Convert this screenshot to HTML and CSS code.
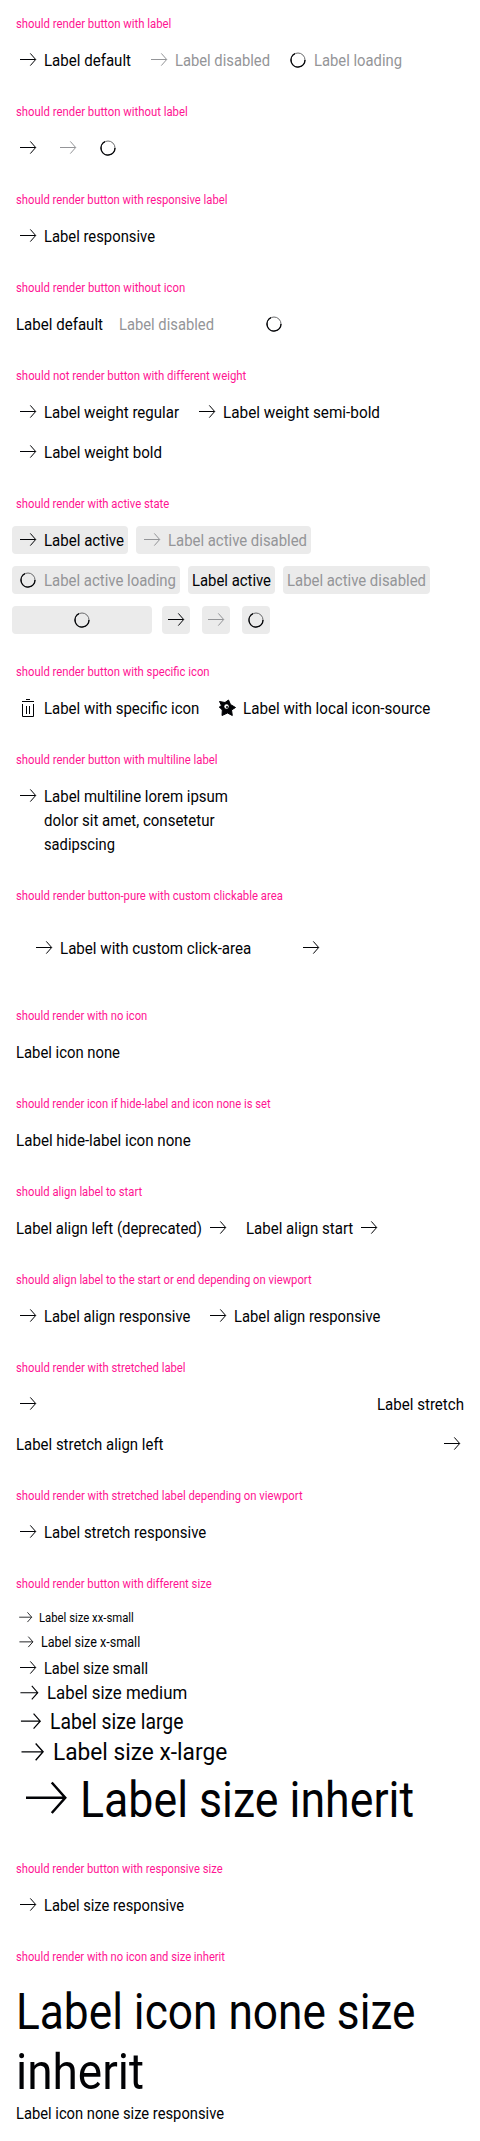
FILE: index.html
```html
<!DOCTYPE html>
<html lang="en">
<head>
<meta charset="utf-8">
<title>Button pure</title>
<link rel="stylesheet" href="styles.css">
</head>
<body>
<svg class="defs" aria-hidden="true">
  <symbol id="arrow" viewBox="0 0 24 24"><path d="M4 11.5H19.6M14.3 5.4L19.7 11.5L14.3 17.6" fill="none" stroke="currentColor" stroke-width="1"/></symbol>
  <symbol id="spin" viewBox="0 0 24 24"><circle cx="12" cy="12" r="7" fill="none" stroke="#6b6c6e" stroke-width="1"/><path d="M9 5.700A7 7 0 1 0 19 12" fill="none" stroke="#010205" stroke-width="1.3"/></symbol>
  <symbol id="trash" viewBox="0 0 24 24"><path d="M6 5.500H18M10 3.500H14M6.500 8V20.500H17.500V8M10.500 10V18M13.500 10V18" fill="none" stroke="currentColor"/></symbol>
  <symbol id="star" viewBox="0 0 24 24"><path d="M4.500 5.500L10 6.500L13.500 4L15.500 8.500L20.500 11.500L16.500 14L17.300 19.500L12.500 17L7 19.500L7.300 14L4.300 11L6.500 9.500Z" fill="currentColor" stroke="currentColor" stroke-linejoin="round"/><circle cx="11.500" cy="10.500" r="2.200" fill="#fff"/><circle cx="12" cy="11" r="1" fill="currentColor"/></symbol>
</svg>

<section><h2 data-w="155.3">should render button with label</h2>
<div class="row"><span class="btn"><svg><use href="#arrow"/></svg><span data-w="87">Label default</span></span><span class="btn off"><svg><use href="#arrow"/></svg><span data-w="95">Label disabled</span></span><span class="btn off"><svg><use href="#spin"/></svg><span data-w="88">Label loading</span></span></div></section>

<section><h2 data-w="171.7">should render button without label</h2>
<div class="row"><span class="btn"><svg><use href="#arrow"/></svg></span><span class="btn off"><svg><use href="#arrow"/></svg></span><span class="btn off"><svg><use href="#spin"/></svg></span></div></section>

<section><h2 data-w="211.5">should render button with responsive label</h2>
<div class="row"><span class="btn"><svg><use href="#arrow"/></svg><span data-w="111">Label responsive</span></span></div></section>

<section><h2 data-w="169.3">should render button without icon</h2>
<div class="row"><span class="btn"><span data-w="87">Label default</span></span><span class="btn off"><span data-w="95">Label disabled</span></span><span class="btn off busy"><svg><use href="#spin"/></svg></span></div></section>

<section><h2 data-w="230.3">should not render button with different weight</h2>
<div class="row"><span class="btn"><svg><use href="#arrow"/></svg><span data-w="135">Label weight regular</span></span><span class="btn"><svg><use href="#arrow"/></svg><span data-w="157">Label weight semi-bold</span></span></div>
<div class="row"><span class="btn"><svg><use href="#arrow"/></svg><span data-w="118">Label weight bold</span></span></div></section>

<section><h2 data-w="153.3">should render with active state</h2>
<div class="row"><span class="btn active"><svg><use href="#arrow"/></svg><span data-w="80">Label active</span></span><span class="btn off active"><svg><use href="#arrow"/></svg><span data-w="139">Label active disabled</span></span></div>
<div class="row"><span class="btn off active"><svg><use href="#spin"/></svg><span data-w="132">Label active loading</span></span><span class="btn active"><span data-w="79">Label active</span></span><span class="btn off active"><span data-w="139">Label active disabled</span></span></div>
<div class="row"><span class="btn off active busy-wide"><svg><use href="#spin"/></svg></span><span class="btn active square"><svg><use href="#arrow"/></svg></span><span class="btn off active square"><svg><use href="#arrow"/></svg></span><span class="btn off active square"><svg><use href="#spin"/></svg></span></div></section>

<section><h2 data-w="193.6">should render button with specific icon</h2>
<div class="row"><span class="btn"><svg><use href="#trash"/></svg><span data-w="155.4">Label with specific icon</span></span><span class="btn"><svg><use href="#star"/></svg><span data-w="187.3">Label with local icon-source</span></span></div></section>

<section><h2 data-w="201.6">should render button with multiline label</h2>
<div class="row"><span class="btn"><svg><use href="#arrow"/></svg><span class="lines"><span data-w="184">Label multiline lorem ipsum</span><span data-w="170.5">dolor sit amet, consetetur</span><span data-w="71">sadipscing</span></span></span></div></section>

<section><h2 data-w="266.8">should render button-pure with custom clickable area</h2>
<div class="row"><span class="btn padded"><svg><use href="#arrow"/></svg><span data-w="191.3">Label with custom click-area</span></span><span class="btn padded"><svg><use href="#arrow"/></svg></span></div></section>

<section><h2 data-w="131.3">should render with no icon</h2>
<div class="row"><span class="btn"><span data-w="104">Label icon none</span></span></div></section>

<section><h2 data-w="254.6">should render icon if hide-label and icon none is set</h2>
<div class="row"><span class="btn"><span data-w="174.7">Label hide-label icon none</span></span></div></section>

<section><h2 data-w="126.2">should align label to start</h2>
<div class="row"><span class="btn"><span data-w="186">Label align left (deprecated)</span><svg><use href="#arrow"/></svg></span><span class="btn"><span data-w="107.3">Label align start</span><svg><use href="#arrow"/></svg></span></div></section>

<section><h2 data-w="295.6">should align label to the start or end depending on viewport</h2>
<div class="row"><span class="btn"><svg><use href="#arrow"/></svg><span data-w="146.4">Label align responsive</span></span><span class="btn"><svg><use href="#arrow"/></svg><span data-w="146.4">Label align responsive</span></span></div></section>

<section><h2 data-w="169.6">should render with stretched label</h2>
<div class="row"><span class="btn stretch"><svg><use href="#arrow"/></svg><span data-w="87">Label stretch</span></span></div>
<div class="row"><span class="btn stretch"><span data-w="147.5">Label stretch align left</span><svg><use href="#arrow"/></svg></span></div></section>

<section><h2 data-w="286.6">should render with stretched label depending on viewport</h2>
<div class="row"><span class="btn"><svg><use href="#arrow"/></svg><span data-w="162.3">Label stretch responsive</span></span></div></section>

<section><h2 data-w="195.6">should render button with different size</h2>
<div class="sizes">
<span class="btn xxs"><svg><use href="#arrow"/></svg><span data-w="94.8">Label size xx-small</span></span>
<span class="btn xs"><svg><use href="#arrow"/></svg><span data-w="99.2">Label size x-small</span></span>
<span class="btn"><svg><use href="#arrow"/></svg><span data-w="104">Label size small</span></span>
<span class="btn md"><svg><use href="#arrow"/></svg><span data-w="140.2">Label size medium</span></span>
<span class="btn lg"><svg><use href="#arrow"/></svg><span data-w="133.4">Label size large</span></span>
<span class="btn xl"><svg><use href="#arrow"/></svg><span data-w="174.2">Label size x-large</span></span>
<span class="btn big"><svg><use href="#arrow"/></svg><span data-w="334">Label size inherit</span></span>
</div></section>

<section><h2 data-w="206.6">should render button with responsive size</h2>
<div class="row"><span class="btn"><svg><use href="#arrow"/></svg><span data-w="140">Label size responsive</span></span></div></section>

<section><h2 data-w="209">should render with no icon and size inherit</h2>
<div class="sizes"><span class="btn big"><span class="lines"><span data-w="399.5">Label icon none size</span><span data-w="128">inherit</span></span></span><span class="btn"><span data-w="208">Label icon none size responsive</span></span></div></section>
<script src="fit.js"></script>
</body>
</html>
```
FILE: styles.css
```css
* { box-sizing: border-box; }
body { margin: 0; background: #fff; color: #010205; font-family: Roboto, sans-serif; }
.defs { position: absolute; width: 0; height: 0; }
section { padding: 0 16px 8px; }
[data-w] { display: block; flex: none; width: max-content; white-space: nowrap; transform-origin: 0 0; }
h2 { margin: 0; padding-top: 15px; height: 40px; font-size: 12.7px; font-weight: 400; line-height: 18px; color: #ff1493; }
.row { display: flex; gap: 16px; padding: 8px 0; }
.btn { position: relative; display: flex; gap: 4px; font-size: 17px; line-height: 24px; }
.btn svg { display: block; flex: none; width: 24px; height: 24px; }
.off { color: #949598; }
.busy { width: 88px; justify-content: center; }
.busy-wide { width: 132px; justify-content: center; }
.active::before { content: ""; position: absolute; z-index: -1; inset: -2px -4px; border-radius: 4px; background: #ebebeb; }
.square::before { inset: -2px; }
.padded { padding: 16px; }
.stretch { width: 100%; justify-content: space-between; }
.lines { display: block; }
.sizes { display: flex; flex-direction: column; padding: 8px 0; }
.btn.xxs { height: 24px; font-size: 12.7px; line-height: 19px; }
.xxs svg { width: 19.2px; height: 19.2px; }
.btn.xs { height: 24px; font-size: 14px; line-height: 21px; }
.xs svg { width: 20.6px; height: 20.6px; }
.btn.md { font-size: 18.8px; line-height: 26.5px; }
.md svg { width: 26.5px; height: 26.5px; }
.btn.lg { font-size: 21.2px; line-height: 29.5px; }
.lg svg { width: 29.5px; height: 29.5px; }
.btn.xl { font-size: 24.2px; line-height: 33px; }
.xl svg { width: 33px; height: 33px; }
.btn.big { font-size: 50.6px; line-height: 60px; }
.big svg { width: 60px; height: 60px; }
.big [data-w] { height: 60px; padding-top: 1px; }
```
FILE: fit.js
```js
// Condense each label to its measured advance width.
document.querySelectorAll('[data-w]').forEach(function (el) {
  var natural = el.getBoundingClientRect().width;
  var width = parseFloat(el.dataset.w);
  el.style.transform = 'scaleX(' + width / natural + ')';
  el.style.marginRight = (width - natural) + 'px';
});
```
